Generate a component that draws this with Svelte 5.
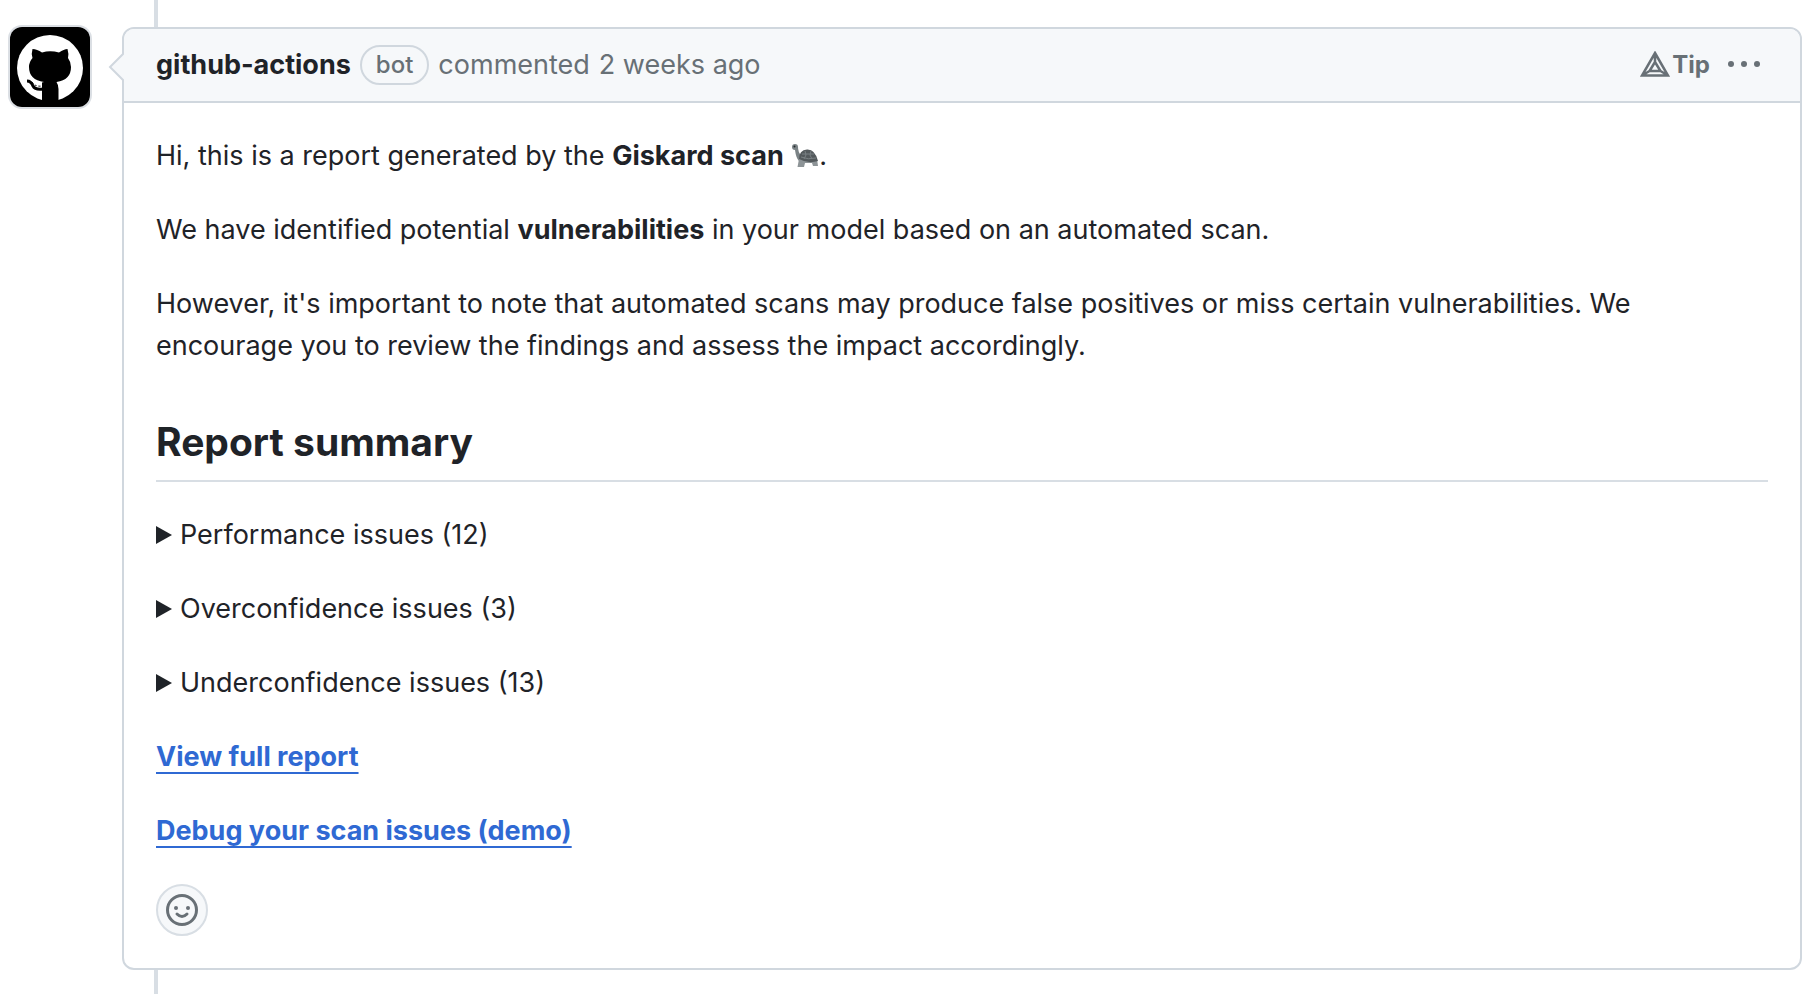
<script lang="ts">
  type Issue = {
    label: string;
    count: number;
  };

  const issues: Issue[] = [
    { label: "Performance issues", count: 12 },
    { label: "Overconfidence issues", count: 3 },
    { label: "Underconfidence issues", count: 13 },
  ];

  const links = ["View full report", "Debug your scan issues (demo)"];
</script>

<div class="timeline">
  <a class="avatar" href="#profile" aria-label="github-actions">
    <svg viewBox="0 0 80 80" aria-hidden="true">
      <rect width="80" height="80" fill="#000" />
      <circle cx="40" cy="41" r="33" fill="#fff" />
      <path
        d="M22.500 22Q27 22 32 25.500Q40 23 49 25.500Q54 22 57.500 22Q59 27 58 31Q61 35 61 40Q61 53 46.500 55Q48.500 58 48.500 62V76H32V55.500L34 55Q19 53 19 40Q19 35 22.500 31Q21 27 22.500 22Z"
      />
      <path
        d="M17 54q4 0 6 5q2 4 10 3"
        fill="none"
        stroke="#000"
        stroke-width="3"
      />
      <path
        d="M22 55q3 5 10 4"
        fill="none"
        stroke="#000"
        stroke-dasharray="2 2"
      />
    </svg>
  </a>

  <article class="comment">
    <header>
      <svg class="arrow" viewBox="0 0 16 32" aria-hidden="true">
        <path d="M16 2L2 16l14 14" />
      </svg>
      <div class="meta">
        <a class="author" href="#author">github-actions</a>
        <span class="label">bot</span>
        <span>commented</span>
        <a class="time" href="#comment">2 weeks ago</a>
      </div>
      <div class="actions">
        <button class="tip">
          <svg viewBox="0 0 30 26" aria-hidden="true">
            <path
              d="M15 2L28 24.500H2ZM15 11L20.500 20H9.500ZM15 2v9M2 24.500l7.500-4.500M28 24.500l-7.500-4.500"
            />
          </svg>
          Tip
        </button>
        <button class="more" aria-label="Show options">
          <svg viewBox="0 0 32 32" aria-hidden="true">
            <circle cx="3" cy="16" r="3" />
            <circle cx="16" cy="16" r="3" />
            <circle cx="29" cy="16" r="3" />
          </svg>
        </button>
      </div>
    </header>

    <div class="body">
      <p>
        Hi, this is a report generated by the <strong>Giskard scan</strong>
        <svg class="turtle" viewBox="0 0 28 28" role="img" aria-label="turtle">
          <path
            fill="#7b8386"
            d="M1 6Q1 3 4 3Q7 3 7 6Q7 11 10 14L12 21L8 20Q5 17 4 9Q1 9 1 6Z"
          />
          <path fill="#8d9497" d="M8 18h18l1 7h-5l-1-3h-7l-1 4H6.500Z" />
          <path fill="#53595c" d="M8 18Q8 9 16 8.500Q24 8 27 20Q17 23 8 18Z" />
          <path
            fill="none"
            stroke="#798083"
            d="M10 16q7 3 15 1M14 10l1 4-2 4M20 10l-1 4 2 4M11 13h12"
          />
          <circle cx="3.500" cy="5.500" r="1" fill="#22282b" />
        </svg>.
      </p>
      <p>
        We have identified potential <strong>vulnerabilities</strong> in your model
        based on an automated scan.
      </p>
      <p>
        However, it's important to note that automated scans may produce false
        positives or miss certain vulnerabilities. We encourage you to review
        the findings and assess the impact accordingly.
      </p>

      <h2>Report summary</h2>

      {#each issues as issue}
        <details>
          <summary>{issue.label} ({issue.count})</summary>
        </details>
      {/each}

      {#each links as link}
        <p><a class="link" href="#report">{link}</a></p>
      {/each}

      <button class="reaction" aria-label="Add your reaction">
        <svg viewBox="0 0 32 32" aria-hidden="true">
          <circle cx="16" cy="16" r="14.5" />
          <path d="M11 20q5 5 10 0" />
          <circle class="eye" cx="10" cy="14" r="2" />
          <circle class="eye" cx="22" cy="14" r="2" />
        </svg>
      </button>
    </div>
  </article>
</div>

<style>
  :global(body) {
    margin: 0;
    background: #fff;
  }

  .timeline {
    position: relative;
    display: flex;
    align-items: flex-start;
    gap: 30px;
    min-height: 100vh;
    box-sizing: border-box;
    padding: 27px 18px 20px 10px;
    color: #1f2328;
    font-family: Inter, "Liberation Sans", sans-serif;
    font-size: 27px;
    line-height: 42px;
  }

  /* thread line running behind the comment */
  .timeline::before {
    content: "";
    position: absolute;
    top: 0;
    bottom: 0;
    left: 154px;
    width: 4px;
    background: #d8dee4;
  }

  .avatar {
    width: 80px;
    height: 80px;
    flex: none;
    border-radius: 12px;
    overflow: hidden;
    box-shadow: 0 0 0 2px #dbdfe4;
  }

  svg {
    display: block;
  }

  .comment {
    position: relative;
    flex: 1;
    min-width: 0;
    margin-left: 2px;
    border: 2px solid #d0d7de;
    border-radius: 12px;
    background: #fff;
  }

  header {
    position: relative;
    display: flex;
    align-items: center;
    justify-content: space-between;
    height: 72px;
    padding: 0 32px;
    border-bottom: 2px solid #d0d7de;
    border-radius: 10px 10px 0 0;
    background: #f6f8fa;
    color: #687076;
  }

  .arrow {
    position: absolute;
    top: 22px;
    left: -16px;
    width: 16px;
    height: 32px;
    fill: #f6f8fa;
    stroke: #d0d7de;
    stroke-width: 2;
  }

  .meta {
    display: flex;
    align-items: center;
    gap: 9px;
  }

  .author {
    color: #1f2328;
    font-weight: 700;
    text-decoration: none;
  }

  .label {
    padding: 0 14px;
    border: 2px solid #d0d7de;
    border-radius: 20px;
    font-size: 24px;
    font-weight: 500;
    line-height: 36px;
  }

  .time {
    color: inherit;
    text-decoration: none;
  }

  button {
    padding: 0;
    border: 0;
    background: none;
    color: inherit;
    font-family: inherit;
    cursor: pointer;
  }

  .actions {
    display: flex;
    align-items: center;
    gap: 18px;
    padding-bottom: 2px;
  }

  .tip {
    display: flex;
    align-items: center;
    gap: 2px;
    font-size: 24px;
    font-weight: 700;
  }

  .tip svg {
    width: 30px;
    height: 26px;
    fill: none;
    stroke: currentColor;
    stroke-width: 2.5;
  }

  .more {
    padding-right: 8px;
  }

  .more svg {
    width: 32px;
    height: 32px;
    fill: currentColor;
  }

  .body {
    padding: 32px;
  }

  p,
  details {
    margin: 0 0 32px;
  }

  strong {
    font-weight: 700;
  }

  .turtle {
    display: inline-block;
    width: 28px;
    height: 28px;
    vertical-align: -4px;
  }

  h2 {
    margin: 48px 0 32px;
    padding-bottom: 12px;
    border-bottom: 2px solid #d8dee4;
    font-size: 39px;
    font-weight: 700;
    line-height: 53px;
  }

  summary {
    display: flex;
    align-items: center;
    gap: 8px;
    cursor: pointer;
  }

  summary::before {
    content: "";
    width: 16px;
    height: 18px;
    background: currentColor;
    clip-path: polygon(0 0, 100% 50%, 0 100%);
  }

  details[open] summary::before {
    rotate: 90deg;
  }

  .link {
    color: #2f69d3;
    font-weight: 700;
    text-decoration: underline 2px;
    text-decoration-skip-ink: none;
    text-underline-offset: 6px;
  }

  .reaction {
    display: grid;
    place-items: center;
    width: 52px;
    height: 52px;
    border: 2px solid #d8dee4;
    border-radius: 50%;
    background: #f6f8fa;
    color: #687076;
  }

  .reaction svg {
    width: 32px;
    height: 32px;
    fill: none;
    stroke: currentColor;
    stroke-width: 3;
    stroke-linecap: round;
  }

  .reaction .eye {
    fill: currentColor;
    stroke: none;
  }
</style>
